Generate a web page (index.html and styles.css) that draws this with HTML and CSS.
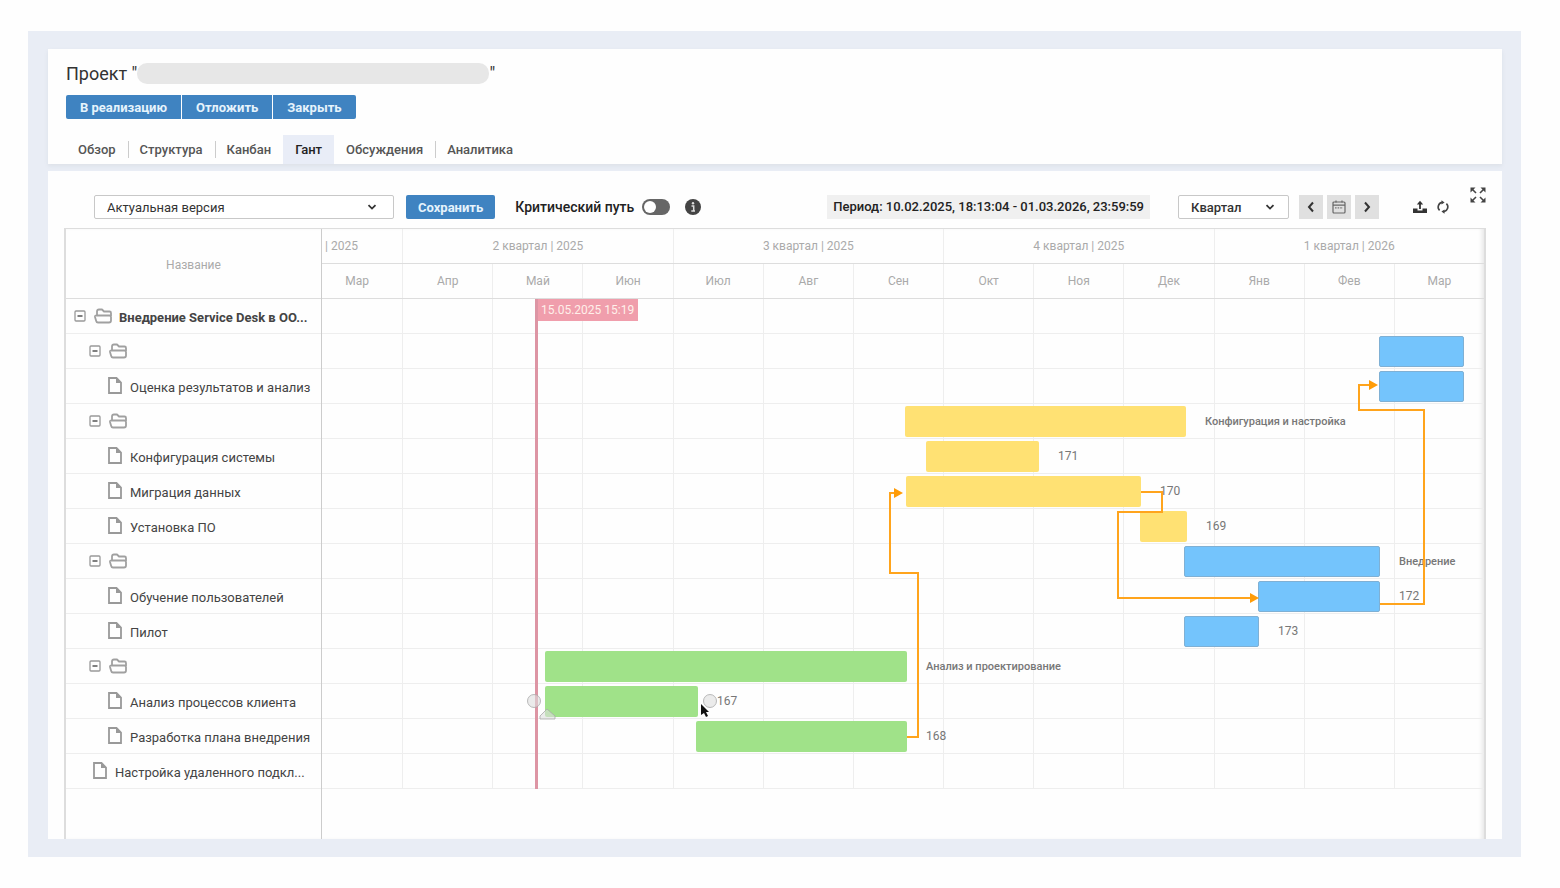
FILE: index.html
```html
<!DOCTYPE html>
<html lang="ru">

<head>
    <meta charset="UTF-8">
    <meta name="viewport" content="width=device-width, initial-scale=1.0">
    <title>Проект - Гант</title>
    <link rel="stylesheet" href="styles.css">
</head>

<body>
    <!-- Shared icons -->
    <svg class="sprite" aria-hidden="true">
        <symbol id="chevron" viewBox="0 0 10 10">
            <path d="M1.5 3.2 5 6.6 8.5 3.2" fill="none" stroke="currentColor" stroke-width="1.8" />
        </symbol>
        <symbol id="minus" viewBox="0 0 12 12">
            <rect x="1" y="1" width="10" height="10" rx="1" fill="none" stroke="#999" stroke-width="1.3" />
            <path d="M3.5 6h5" stroke="#555" stroke-width="1.5" />
        </symbol>
        <symbol id="folder" viewBox="0 0 20 16">
            <path d="M4 7V3.500Q4 1.500 6 1.500H9L11 3.500H16.500Q18 3.500 18 5V8M3.500 7.500H16.500Q18 7.500 18 9V12.500Q18 14.500 16 14.500H5Q3.500 14.500 3.200 13L2 9Q1.700 7.500 3.500 7.500Z" fill="none" stroke="#a0a0a0" stroke-width="1.800" stroke-linejoin="round" />
        </symbol>
        <symbol id="file" viewBox="0 0 14 17">
            <path d="M1 1H8.500L13 5.500V16H1Z" fill="none" stroke="#999" stroke-width="1.800" />
            <path d="M8 1V6H13Z" fill="#999" />
        </symbol>
    </svg>

    <div class="frame">
        <header class="panel project">
            <h1>Проект "<span class="hidden-name"></span>"</h1>
            <div class="actions">
                <button type="button">В реализацию</button>
                <button type="button">Отложить</button>
                <button type="button">Закрыть</button>
            </div>
            <nav class="tabs">
                <a href="#">Обзор</a>
                <a href="#">Структура</a>
                <a href="#">Канбан</a>
                <a href="#" class="active">Гант</a>
                <a href="#">Обсуждения</a>
                <a href="#">Аналитика</a>
            </nav>
        </header>

        <main class="panel chart-panel">
            <div class="toolbar">
                <div class="select version">
                    <select aria-label="Версия">
                        <option>Актуальная версия</option>
                    </select>
                    <svg><use href="#chevron" /></svg>
                </div>
                <button type="button" class="save">Сохранить</button>
                <label class="switch">
                    Критический путь
                    <input type="checkbox">
                </label>
                <button type="button" class="icon-btn info" aria-label="Информация">
                    <svg viewBox="0 0 16 16">
                        <circle cx="8" cy="8" r="8" fill="#444" />
                        <circle cx="8" cy="4.300" r="1.200" fill="#ddd" />
                        <path d="M6.500 7H8.700V12M6.300 12H10" fill="none" stroke="#ddd" stroke-width="1.500" />
                    </svg>
                </button>

                <div class="period">Период: 10.02.2025, 18:13:04 - 01.03.2026, 23:59:59</div>
                <div class="select scale">
                    <select aria-label="Масштаб">
                        <option>Квартал</option>
                    </select>
                    <svg><use href="#chevron" /></svg>
                </div>
                <div class="pager">
                    <button type="button" aria-label="Назад">
                        <svg viewBox="0 0 14 14"><path d="M9 2.500 5 7l4 4.500" fill="none" stroke="#333" stroke-width="2" /></svg>
                    </button>
                    <button type="button" aria-label="Сегодня">
                        <svg viewBox="0 0 14 14">
                            <rect x="1" y="2" width="12" height="11" rx="1" fill="none" stroke="#666" stroke-width="1.200" />
                            <path d="M1 5.200h12M4 .5v2M10 .5v2" stroke="#666" stroke-width="1.200" />
                            <path d="M3 7.800h8" stroke="#777" stroke-width="1.300" stroke-dasharray="1.600 1" />
                        </svg>
                    </button>
                    <button type="button" aria-label="Вперед">
                        <svg viewBox="0 0 14 14"><path d="M5 2.500 9 7l-4 4.500" fill="none" stroke="#333" stroke-width="2" /></svg>
                    </button>
                </div>
                <div class="tools">
                    <button type="button" class="icon-btn" aria-label="Экспорт">
                        <svg viewBox="0 0 14 14">
                            <path d="M0 8.500H4.500V10.500H9.500V8.500H14V13H0Z" fill="#333" />
                            <path d="M7 9V3" stroke="#333" stroke-width="1.800" />
                            <path d="M3.800 4.500 7 .8l3.200 3.700Z" fill="#333" />
                        </svg>
                    </button>
                    <button type="button" class="icon-btn" aria-label="Обновить">
                        <svg viewBox="0 0 14 14">
                            <path d="M3.600 10.400A4.700 4.700 0 0 1 6 2.400M10.400 3.600A4.700 4.700 0 0 1 8 11.600" fill="none" stroke="#444" stroke-width="1.600" />
                            <path d="M5.500.3 8.600 2.400 5.500 4.600ZM8.500 13.700 5.400 11.600 8.500 9.400Z" fill="#444" />
                        </svg>
                    </button>
                </div>
                <button type="button" class="icon-btn fullscreen" aria-label="На весь экран">
                    <svg viewBox="0 0 16 16">
                        <path d="M2 2l4 4M14 2l-4 4M2 14l4-4M14 14l-4-4" stroke="#444" stroke-width="1.600" />
                        <path d="M.5.5H5.500L.5 5.500ZM15.500.5V5.500L10.500.5ZM.5 15.500V10.500L5.500 15.500ZM15.500 15.500H10.500L15.500 10.500Z" fill="#444" />
                    </svg>
                </button>
            </div>

            <div class="gantt">
                <table class="tree">
                    <thead>
                        <tr><th>Название</th></tr>
                    </thead>
                    <tbody>
                        <tr class="root"><td><div class="node"><button type="button" aria-label="Свернуть"><svg><use href="#minus" /></svg></button><svg class="folder"><use href="#folder" /></svg><span>Внедрение Service Desk в ОО...</span></div></td></tr>
                        <tr class="group"><td><div class="node"><button type="button" aria-label="Свернуть"><svg><use href="#minus" /></svg></button><svg class="folder"><use href="#folder" /></svg></div></td></tr>
                        <tr class="task"><td><div class="node"><svg class="file"><use href="#file" /></svg><span>Оценка результатов и анализ</span></div></td></tr>
                        <tr class="group"><td><div class="node"><button type="button" aria-label="Свернуть"><svg><use href="#minus" /></svg></button><svg class="folder"><use href="#folder" /></svg></div></td></tr>
                        <tr class="task"><td><div class="node"><svg class="file"><use href="#file" /></svg><span>Конфигурация системы</span></div></td></tr>
                        <tr class="task"><td><div class="node"><svg class="file"><use href="#file" /></svg><span>Миграция данных</span></div></td></tr>
                        <tr class="task"><td><div class="node"><svg class="file"><use href="#file" /></svg><span>Установка ПО</span></div></td></tr>
                        <tr class="group"><td><div class="node"><button type="button" aria-label="Свернуть"><svg><use href="#minus" /></svg></button><svg class="folder"><use href="#folder" /></svg></div></td></tr>
                        <tr class="task"><td><div class="node"><svg class="file"><use href="#file" /></svg><span>Обучение пользователей</span></div></td></tr>
                        <tr class="task"><td><div class="node"><svg class="file"><use href="#file" /></svg><span>Пилот</span></div></td></tr>
                        <tr class="group"><td><div class="node"><button type="button" aria-label="Свернуть"><svg><use href="#minus" /></svg></button><svg class="folder"><use href="#folder" /></svg></div></td></tr>
                        <tr class="task"><td><div class="node"><svg class="file"><use href="#file" /></svg><span>Анализ процессов клиента</span></div></td></tr>
                        <tr class="task"><td><div class="node"><svg class="file"><use href="#file" /></svg><span>Разработка плана внедрения</span></div></td></tr>
                        <tr class="single"><td><div class="node"><svg class="file"><use href="#file" /></svg><span>Настройка удаленного подкл...</span></div></td></tr>
                    </tbody>
                </table>

                <div class="timeline">
                    <div class="scale-row quarters">
                        <div class="cut">| 2025</div>
                        <div>2 квартал | 2025</div>
                        <div>3 квартал | 2025</div>
                        <div>4 квартал | 2025</div>
                        <div>1 квартал | 2026</div>
                    </div>
                    <div class="scale-row months">
                        <div class="cut-month">Мар</div>
                        <div>Апр</div>
                        <div>Май</div>
                        <div>Июн</div>
                        <div>Июл</div>
                        <div>Авг</div>
                        <div>Сен</div>
                        <div>Окт</div>
                        <div>Ноя</div>
                        <div>Дек</div>
                        <div>Янв</div>
                        <div>Фев</div>
                        <div>Мар</div>
                    </div>

                    <div class="canvas">
                        <div class="months columns">
                            <div></div><div></div><div></div><div></div><div></div><div></div><div></div>
                            <div></div><div></div><div></div><div></div><div></div><div></div>
                        </div>
                        <!-- --from and --len are units of the 1162-unit time scale -->
                        <div class="rows">
                            <div class="row"></div>
                            <div class="row"><div class="bar blue" style="--from: 1057; --len: 85"></div></div>
                            <div class="row"><div class="bar blue" style="--from: 1057; --len: 85"></div></div>
                            <div class="row"><div class="bar yellow" style="--from: 583; --len: 281"></div><span class="summary">Конфигурация и настройка</span></div>
                            <div class="row"><div class="bar yellow" style="--from: 604; --len: 113"></div><span>171</span></div>
                            <div class="row"><div class="bar yellow" style="--from: 584; --len: 235"></div><span>170</span></div>
                            <div class="row"><div class="bar yellow" style="--from: 818; --len: 47"></div><span>169</span></div>
                            <div class="row"><div class="bar blue" style="--from: 862; --len: 196"></div><span class="summary">Внедрение</span></div>
                            <div class="row"><div class="bar blue" style="--from: 936; --len: 122"></div><span>172</span></div>
                            <div class="row"><div class="bar blue" style="--from: 862; --len: 75"></div><span>173</span></div>
                            <div class="row"><div class="bar green" style="--from: 223; --len: 362"></div><span class="summary">Анализ и проектирование</span></div>
                            <div class="row"><div class="bar green" style="--from: 223; --len: 153"></div><span>167</span></div>
                            <div class="row"><div class="bar green" style="--from: 374; --len: 211"></div><span>168</span></div>
                            <div class="row"></div>
                        </div>
                        <div class="now" style="--from: 213"><span>15.05.2025 15:19</span></div>
                        <svg class="links" viewBox="0 0 1162 490" preserveAspectRatio="none">
                            <g fill="none" stroke="#ffa41c" stroke-width="2">
                                <path d="M585 438H596V274H568V194H573" />
                                <path d="M819 193H840V213H796V299H929" />
                                <path d="M1058 305H1102V111H1037V86H1049" />
                            </g>
                            <g fill="#ff9c08">
                                <path d="M572 189 581 194 572 199Z" />
                                <path d="M928 294 937 299 928 304Z" />
                                <path d="M1047 81 1056 86 1047 91Z" />
                            </g>
                            <g fill="#dddddd" fill-opacity="0.6" stroke="#aaa" stroke-opacity="0.8">
                                <circle cx="212" cy="402" r="6.500" />
                                <circle cx="388" cy="402" r="6.500" />
                                <path d="M218 417 225 410 233 417V420H218Z" />
                            </g>
                            <path d="M379 405V416L382 414 384 418 386 417 384 413H387Z" fill="#111" />
                        </svg>
                    </div>
                </div>
            </div>
        </main>
    </div>
</body>

</html>
```
FILE: styles.css
```css
* {
    margin: 0;
    padding: 0;
    box-sizing: border-box;
}

body {
    font-family: Roboto, sans-serif;
    font-size: 13px;
    color: #444;
    background-color: #fefefe;
    min-height: 100vh;
    display: flex;
    padding: 31px 39px 31px 28px;
}

button,
select {
    font-family: inherit;
    cursor: pointer;
}

svg {
    display: block;
    flex: none;
}

.sprite {
    position: absolute;
    width: 0;
    height: 0;
}

.frame {
    flex: 1;
    min-width: 0;
    display: flex;
    flex-direction: column;
    gap: 7px;
    padding: 18px 19px 18px 20px;
    background: #e9edf5;
}

.panel {
    background: #fefefe;
}

/* Project header */
.project {
    padding: 12px 18px 0;
    box-shadow: 0 2px 4px rgba(120, 130, 130, 0.1);
}

h1 {
    display: flex;
    align-items: center;
    height: 24px;
    font-size: 18px;
    font-weight: 400;
    white-space: pre;
    color: #333;
}

.hidden-name {
    width: 352px;
    height: 21px;
    border-radius: 10px;
    background: #e7e7e7;
}

.actions {
    display: flex;
    gap: 1px;
    margin-top: 10px;
}

.actions button,
.save {
    height: 24px;
    border: none;
    background: #3f83c1;
    color: #e6f3fc;
    font-size: 13px;
    font-weight: 700;
}

.actions button {
    padding: 0 14px;
}

.actions button:first-child {
    border-radius: 2px 0 0 2px;
}

.actions button:last-child {
    border-radius: 0 2px 2px 0;
}

.tabs {
    display: flex;
    margin-top: 16px;
}

.tabs a {
    position: relative;
    padding: 1px 12px 0;
    line-height: 28px;
    font-size: 13px;
    font-weight: 500;
    color: #555;
    text-decoration: none;
}

.tabs a:not(.active) + a:not(.active)::before {
    content: "";
    position: absolute;
    left: 0;
    top: 6px;
    height: 17px;
    border-left: 1px solid #ccc;
}

.tabs .active {
    background: #e9edf7;
    color: #222;
}

/* Toolbar */
.chart-panel {
    flex: 1;
    display: flex;
    flex-direction: column;
    padding: 16px 16px 0;
}

.toolbar {
    display: flex;
    align-items: center;
    height: 40px;
    margin-bottom: 1px;
    padding-left: 30px;
}

.select {
    position: relative;
}

.select select {
    appearance: none;
    width: 100%;
    height: 24px;
    padding: 0 12px;
    border: 1px solid #c8c8c8;
    border-radius: 2px;
    background: #fff;
    color: #333;
    font-size: 13px;
}

.select svg {
    position: absolute;
    right: 17px;
    top: 7px;
    width: 10px;
    height: 10px;
    color: #333;
    pointer-events: none;
}

.version {
    width: 300px;
}

.scale {
    width: 111px;
    margin-left: 28px;
}

.scale select {
    font-weight: 500;
}

.scale svg {
    right: 14px;
}

.save {
    margin-left: 12px;
    padding: 0 12px;
    border-radius: 2px;
}

.switch {
    display: flex;
    align-items: center;
    gap: 8px;
    margin-left: 20px;
    color: #222;
    font-size: 14px;
    font-weight: 500;
    white-space: nowrap;
}

.switch input {
    appearance: none;
    width: 28px;
    height: 16px;
    padding: 2px;
    border-radius: 8px;
    background: #666;
}

.switch input::before {
    content: "";
    display: block;
    width: 12px;
    height: 12px;
    border-radius: 50%;
    background: #fff;
}

.switch input:checked::before {
    margin-left: auto;
}

.icon-btn {
    border: none;
    background: none;
}

.icon-btn svg {
    width: 14px;
    height: 14px;
}

.info {
    margin-left: 15px;
}

.info svg,
.fullscreen svg {
    width: 16px;
    height: 16px;
}

.period {
    margin-left: auto;
    padding: 0 6px;
    line-height: 24px;
    background: #f0f0f0;
    color: #222;
    font-weight: 500;
    white-space: nowrap;
}

.pager {
    display: flex;
    gap: 4px;
    margin-left: 10px;
}

.pager button {
    width: 24px;
    height: 24px;
    padding: 5px;
    border: none;
    background: #e0e0e0;
}

.tools {
    display: flex;
    gap: 9px;
    margin-left: 34px;
}

.fullscreen {
    align-self: flex-start;
    margin-left: 20px;
}

/* Gantt chart */
.gantt {
    flex: 1;
    display: grid;
    grid-template-columns: 255px minmax(0, 1fr);
    border: solid #ddd;
    border-width: 1px 2px 0;
    box-shadow: inset -4px 0 4px -2px #e6e6e6;
}

.tree {
    align-self: start;
    width: 100%;
    table-layout: fixed;
    border-collapse: collapse;
}

.tree th {
    height: 69px;
    padding-top: 4px;
    border-bottom: 1px solid #ddd;
    font-size: 12px;
    font-weight: 400;
    color: #aaa;
}

.tree td {
    height: 35px;
    border-bottom: 1px solid #eee;
}

.node {
    display: flex;
    align-items: center;
}

.node button {
    width: 12px;
    height: 12px;
    margin-right: 7px;
    border: none;
    background: none;
}

.node button svg {
    width: 12px;
    height: 12px;
}

.node span {
    padding-top: 4px;
    white-space: nowrap;
}

.folder {
    width: 20px;
    height: 16px;
}

.file {
    width: 14px;
    height: 17px;
    margin-right: 8px;
}

.root .node {
    padding-left: 8px;
    font-weight: 700;
}

.root .folder {
    margin-right: 6px;
}

.group .node {
    padding-left: 23px;
}

.task .node {
    padding-left: 42px;
}

.single .node {
    padding-left: 27px;
}

.timeline {
    display: flex;
    flex-direction: column;
    border-left: 1px solid #ccc;
}

.scale-row {
    display: grid;
    height: 35px;
    line-height: 34px;
    border-bottom: 1px solid #ddd;
    font-size: 12px;
    color: #aaa;
    text-align: center;
}

.quarters {
    grid-template-columns: 80fr repeat(4, 270fr);
}

.months {
    display: grid;
    grid-template-columns: 80fr repeat(12, 90fr);
}

.quarters div + div,
.months div + div {
    border-left: 1px solid #eee;
}

.cut {
    padding-left: 3px;
    text-align: left;
}

.cut-month {
    padding-right: 10px;
}

/* Column lines, rows and links share one grid cell */
.canvas {
    display: grid;
}

.canvas > * {
    grid-area: 1 / 1;
    min-width: 0;
}

.row {
    display: flex;
    align-items: center;
    height: 35px;
    border-bottom: 1px solid #eee;
}

.row span {
    margin-left: 19px;
    font-size: 12px;
    color: #777;
    white-space: nowrap;
}

.row .summary {
    font-size: 11px;
    font-weight: 500;
}

.bar {
    flex: none;
    height: 31px;
    margin-left: calc(var(--from) * 100% / 1162);
    width: calc(var(--len) * 100% / 1162);
    border-radius: 2px;
}

.blue {
    background: #74c4fc;
    border: 1px solid #7fb0d4;
}

.yellow {
    background: #ffe173;
}

.green {
    background: #a0e289;
}

.now {
    margin-left: calc(var(--from) * 100% / 1162);
    border-left: 3px solid #dd95a4;
    justify-self: start;
}

.now span {
    display: block;
    padding: 0 4px 0 3px;
    line-height: 22px;
    font-size: 12px;
    color: #fff0ea;
    background: #f09eac;
}

.links {
    width: 100%;
    height: 490px;
}
```
